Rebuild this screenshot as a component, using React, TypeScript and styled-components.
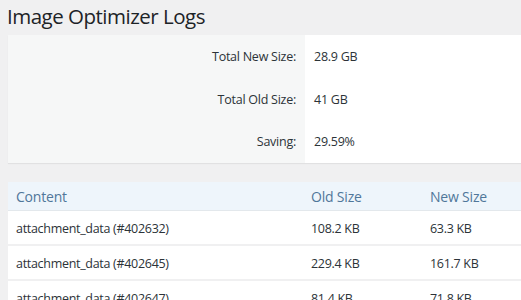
import React from "react";
import styled, { createGlobalStyle } from "styled-components";

const Global = createGlobalStyle`
  html, body { margin: 0; padding: 0; background: #f0f0f1; overflow: hidden; }
  body { font-family: "Open Sans", "Noto Sans", sans-serif; color: #2c3338; }
`;

const Page = styled.div`
  padding: 0 0 0 8px;
  width: 600px;
`;

const Title = styled.h1`
  margin: 0;
  padding: 2px 0 0 0;
  margin-left: -1px;
  font-size: 20.5px;
  font-weight: 400;
  line-height: 28px;
  color: #1d2327;
  letter-spacing: -0.5px;
`;

const Summary = styled.table`
  margin-top: 5px;
  width: 100%;
  border-collapse: collapse;
  background: #fff;
  box-shadow: 0 1px 1px rgba(0, 0, 0, 0.06);
`;

const Label = styled.th`
  width: 288px;
  background: #f6f7f7;
  text-align: right;
  font-weight: 400;
  font-size: 12.5px;
  letter-spacing: -0.25px;
  padding: 0 9px 0 0;
  height: 42.7px;
  color: #2c3338;
`;

const Value = styled.td`
  font-size: 12.5px;
  letter-spacing: -0.25px;
  padding: 0 0 0 9px;
  color: #2c3338;
`;

const Logs = styled.table`
  margin-top: 19px;
  width: 100%;
  border-collapse: collapse;
  background: #fff;
  table-layout: fixed;
`;

const Head = styled.th<{ $w?: number }>`
  ${(p) => (p.$w ? `width: ${p.$w}px;` : "")}
  background: #eef5fb;
  text-align: left;
  font-weight: 400;
  font-size: 14px;
  letter-spacing: -0.2px;
  color: #50779a;
  height: 28px;
  padding: 0 8px;
  border-bottom: 1px solid #e3e8ec;
`;

const Row = styled.tr`
  border-bottom: 2px solid #f0f0f1;
`;

const Cell = styled.td`
  font-size: 12.5px;
  letter-spacing: -0.3px;
  height: 32px;
  padding: 1px 8px 0;
  color: #2c3338;
  white-space: nowrap;
`;

const stats = [
  ["Total New Size:", "28.9 GB"],
  ["Total Old Size:", "41 GB"],
  ["Saving:", "29.59%"],
];

const rows = [
  ["attachment_data (#402632)", "108.2 KB", "63.3 KB"],
  ["attachment_data (#402645)", "229.4 KB", "161.7 KB"],
  ["attachment_data (#402647)", "81.4 KB", "71.8 KB"],
];

export default function App() {
  return (
    <>
      <Global />
      <Page>
        <Title>Image Optimizer Logs</Title>
        <Summary>
          <tbody>
            {stats.map(([k, v]) => (
              <tr key={k}>
                <Label>{k}</Label>
                <Value>{v}</Value>
              </tr>
            ))}
          </tbody>
        </Summary>
        <Logs>
          <thead>
            <tr>
              <Head $w={279}>Content</Head>
              <Head $w={103}>Old Size</Head>
              <Head>New Size</Head>
            </tr>
          </thead>
          <tbody>
            {rows.map((r) => (
              <Row key={r[0]}>
                <Cell>{r[0]}</Cell>
                <Cell>{r[1]}</Cell>
                <Cell>{r[2]}</Cell>
              </Row>
            ))}
          </tbody>
        </Logs>
      </Page>
    </>
  );
}
